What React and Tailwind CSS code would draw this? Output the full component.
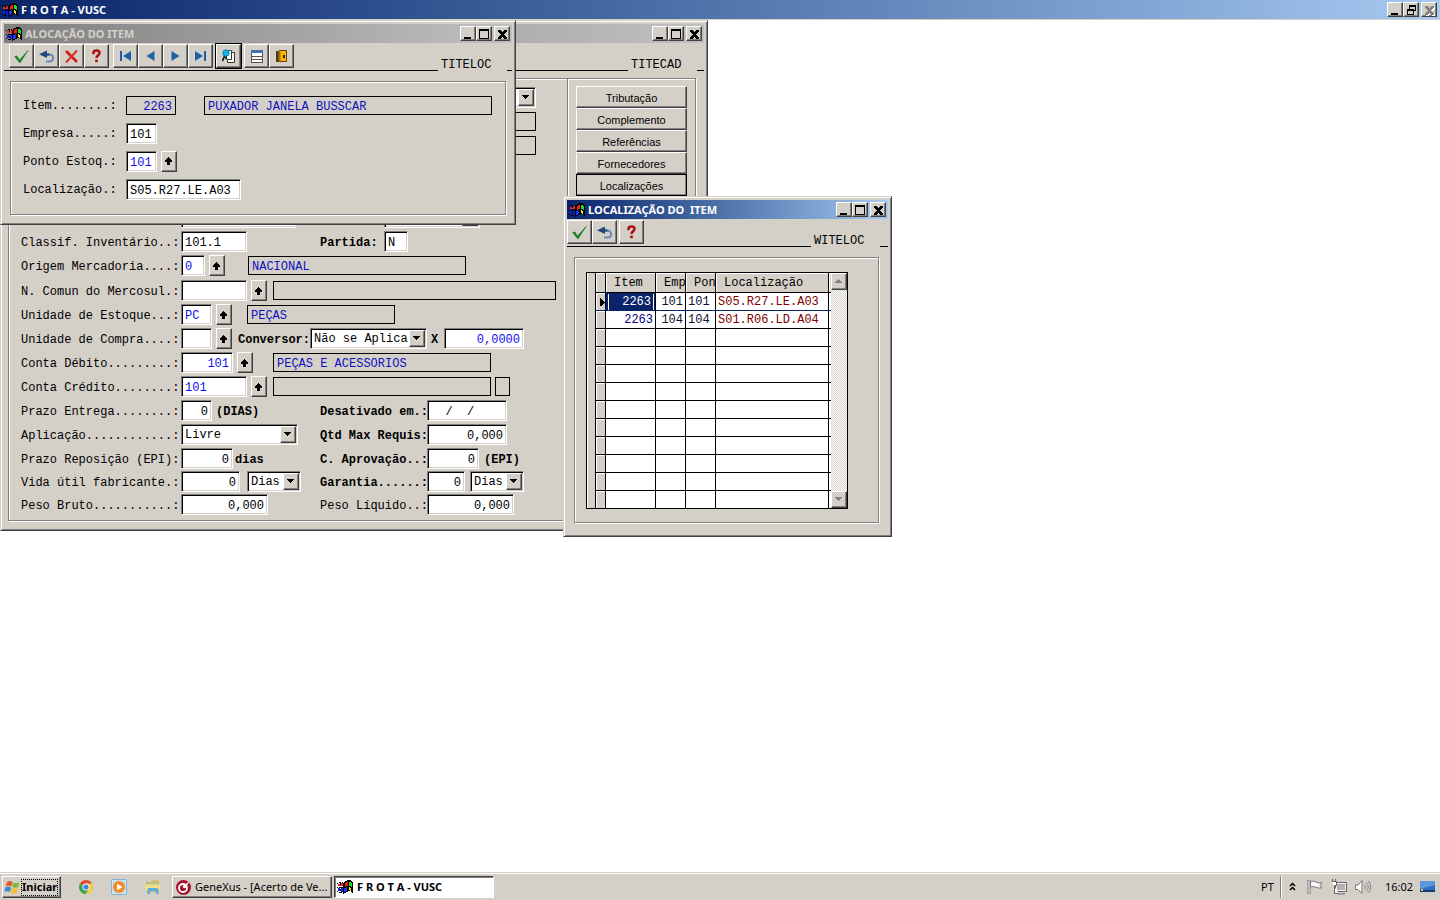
import { useState } from "react";
import clsx from "clsx";

const RAISED =
  "border border-t-white border-l-white border-r-[#404040] border-b-[#404040] bg-[#d4d0c8] shadow-[inset_-1px_-1px_0_#808080]";
const SUNKEN =
  "border border-t-[#808080] border-l-[#808080] border-r-white border-b-white shadow-[inset_1px_1px_0_#000,inset_-1px_-1px_0_#d4d0c8] bg-white";

/* ---------- icons ---------- */

const FlagIcon = () => (
  <svg width="17" height="16" viewBox="0 0 17 16" shapeRendering="crispEdges" aria-hidden="true" className="shrink-0">
    <path d="M7 3h1V2h2V1h4v1h1v1h1v11h-1v-1h-1v-1h-3v1H9v1H7v1H6V4h1z" fill="#000" />
    <path d="M8 4h1V3h2v4H9v1H8z" fill="#f02020" />
    <path d="M12 3h2v1h1v4h-1V7h-2z" fill="#20e020" />
    <path d="M7 9h2V8h1v4H9v1H7z" fill="#2030f0" />
    <path d="M12 8h1v1h1v3h-1v-1h-1z" fill="#f0f020" />
    <path d="M0 4h1v1H0zM2 3h2v1H2zM5 3h1v1H5zM0 8h1v1H0zM2 8h4v1H2zM0 12h1v1H0zM2 13h3v1H2zM3 4h1v2H3zM3 10h1v2H3z" fill="#000" />
    <path d="M1 5h2v2H1zM4 4h2v3H4zM3 6h1v1H3z" fill="#e02828" />
    <path d="M1 9h2v3H1zM4 9h2v4H4z" fill="#1020e0" />
  </svg>
);

const CheckIcon = () => (
  <svg width="17" height="17" viewBox="0 0 17 17" aria-hidden="true">
    <path d="M1.500 8.500 4 7.500 6.500 11.500 15.500 2 7 15.500z" fill="#1c8a28" />
    <path d="M2 8.500 6.500 14 15 2.500" fill="none" stroke="#1c7a28" strokeWidth="1" />
  </svg>
);

const UndoIcon = () => (
  <svg width="17" height="17" viewBox="0 0 17 17" aria-hidden="true">
    <path d="M7 6.500h4c5.500 0 5.500 7 0 7H8" fill="none" stroke="#6a8bb8" strokeWidth="2" />
    <path d="M1 6.200 9 2.500v7.500z" fill="#1f4778" />
    <path d="M8 6.500h3.500" stroke="#1f4778" strokeWidth="2" />
  </svg>
);

const CancelIcon = () => (
  <svg width="17" height="17" viewBox="0 0 17 17" aria-hidden="true">
    <path d="M3 3 14 14" stroke="#d81818" strokeWidth="2.600" />
    <path d="M14 2.500 3 14.500" stroke="#d83028" strokeWidth="2" />
  </svg>
);

const HelpIcon = () => (
  <svg width="17" height="17" viewBox="0 0 17 17" aria-hidden="true">
    <path d="M5.500 6.200V4.600C5.500 1.600 11.700 1.600 11.500 5c0 2.200-3 2.300-3 5" fill="none" stroke="#a81010" strokeWidth="2.500" />
    <rect x="7.200" y="11.600" width="2.600" height="2.600" fill="#a81010" />
  </svg>
);

const NavIcon = ({ back, bar }) => (
  <svg width="17" height="17" viewBox="0 0 17 17" aria-hidden="true">
    <g transform={back ? undefined : "matrix(-1 0 0 1 17 0)"} fill="#1d62a8">
      {bar && <rect x="3" y="3" width="2" height="10" />}
      <path d={bar ? "M6 8 14 3v10z" : "M4.500 8 12.500 3v10z"} />
    </g>
  </svg>
);

const SearchDocsIcon = () => (
  <svg width="17" height="17" viewBox="0 0 17 17" aria-hidden="true">
    <path d="M6.500 2.500h5v9h-5z" fill="#fff" stroke="#444" />
    <path d="M11.500 4.500h3v10h-7v-3h4z" fill="#fff" stroke="#333" />
    <path d="M4.500 8 2.500 13M6 8v3" stroke="#111" strokeWidth="1.600" />
    <circle cx="6" cy="5" r="3.200" fill="#18b0e8" stroke="#1080b0" />
  </svg>
);

const ListIcon = () => (
  <svg width="17" height="17" viewBox="0 0 17 17" shapeRendering="crispEdges" aria-hidden="true">
    <rect x="3" y="4" width="11" height="11" fill="#fff" />
    <path d="M3 2h12v3H3z" fill="#3f74b0" />
    <path d="M3 5h1v10H3zM14 5h1v10h-1zM3 8h12v1H3zM3 11h12v1H3zM3 14h12v1H3z" fill="#555" />
  </svg>
);

const DoorIcon = () => (
  <svg width="17" height="17" viewBox="0 0 17 17" aria-hidden="true">
    <path d="M3 3h4v11H3z" fill="#4a3b20" />
    <path d="M6 2.500h7.500v11H7" fill="#ffb400" stroke="#5a4410" />
    <path d="M7.500 4v11l-2-2V3z" fill="#a87400" />
    <rect x="10" y="7" width="2" height="3" fill="#222" />
  </svg>
);

const UpArrow = () => (
  <svg width="8" height="8" viewBox="0 0 8 8" shapeRendering="crispEdges" aria-hidden="true">
    <path d="M3 0h1v1h1v1h1v1h1v2H5v3H2V5H0V3h1V2h1V1h1z" fill="#000" />
  </svg>
);

const Triangle = ({ up, color = "#000" }) => (
  <svg width="8" height="5" viewBox="0 0 8 5" shapeRendering="crispEdges" aria-hidden="true">
    <path d={up ? "M3 0h1v1h1v1h1v1h1v1H0V3h1V2h1V1h1z" : "M0 0h7v1H6v1H5v1H4v1H3V3H2V2H1V1H0z"} fill={color} />
  </svg>
);

const CAPTION_PATHS = {
  Minimizar: "M2 9h7v2H2z",
  Maximizar: "M1 1h10v10H1zM2 3v7h8V3z",
  Restaurar: "M4 1h7v6H9v4H2V5h2zM5 3v2h4v1h1V3zM3 7v3h5V7z",
  Fechar: "M2 2h2v1h1v1h2V3h1V2h2v1H9v1H8v1H7v2h1v1h1v1h1v1H8V9H7V8H5v1H4v1H2V9h1V8h1V7h1V5H4V4H3V3H2z",
};

/* ---------- window chrome ---------- */

const CaptionButton = ({ name, disabled }) => (
  <button
    type="button"
    aria-label={name}
    disabled={disabled}
    className={clsx(RAISED, "flex h-[15px] w-4 items-center justify-center", name === "Fechar" && "ml-[2px]")}
  >
    <svg width="12" height="12" viewBox="0 0 12 12" shapeRendering="crispEdges" aria-hidden="true">
      {disabled && (
        <path d={CAPTION_PATHS[name]} fill="#fff" stroke="#fff" strokeWidth="1" transform="translate(1 1)" />
      )}
      <path
        d={CAPTION_PATHS[name]}
        fill={disabled ? "#808080" : "#000"}
        stroke={name === "Fechar" ? (disabled ? "#808080" : "#000") : "none"}
        strokeWidth="1"
        fillRule="evenodd"
      />
    </svg>
  </button>
);

const TitleBar = ({ title, active }) => (
  <div
    className={clsx(
      "flex h-[19px] items-center bg-linear-to-r pr-[2px] pl-[2px] font-['Noto_Sans',sans-serif] text-[11px] font-bold",
      active ? "from-[#0a246a] to-[#a6caf0] text-white" : "from-[#808080] to-[#c0c0c0] text-[#d4d0c8]"
    )}
  >
    <FlagIcon />
    <h2 className="ml-[2px] flex-1 truncate whitespace-pre">{title}</h2>
    <CaptionButton name="Minimizar" />
    <CaptionButton name="Maximizar" />
    <CaptionButton name="Fechar" />
  </div>
);

const ToolHeader = ({ code, endClass, children }) => (
  <div className="flex h-7 items-end">
    <div className="flex h-full flex-1 items-start border-b border-black pt-px">{children}</div>
    <span className="w-[69px] pl-[3px] leading-3">{code}</span>
    <span className={clsx("border-b border-black", endClass)} />
  </div>
);

const ToolButton = ({ label, focused, className, children }) => (
  <button
    type="button"
    aria-label={label}
    className={clsx(
      RAISED,
      "flex h-6 w-[25px] items-center justify-center",
      focused && "outline-1 outline-black",
      className
    )}
  >
    {children}
  </button>
);

const AppWindow = ({ title, active, className, children }) => (
  <section
    className={clsx(
      "absolute border border-t-[#d4d0c8] border-r-[#404040] border-b-[#404040] border-l-[#d4d0c8] bg-[#d4d0c8] p-[3px] shadow-[inset_1px_1px_0_#fff,inset_-1px_-1px_0_#808080]",
      className
    )}
  >
    <TitleBar title={title} active={active} />
    {children}
  </section>
);

const Group = ({ className, children }) => (
  <div className={clsx("border border-[#808080] shadow-[1px_1px_0_#fff,inset_1px_1px_0_#fff]", className)}>
    {children}
  </div>
);

/* ---------- form controls ---------- */

const TextField = ({ id, label, value = "", className }) => {
  const [text, setText] = useState(value);
  return (
    <input
      id={id}
      aria-label={label}
      value={text}
      onChange={(e) => setText(e.target.value)}
      className={clsx(SUNKEN, "h-[21px] px-[3px] pt-[3px] outline-none", className)}
    />
  );
};

const SelectField = ({ id, label, options, className }) => (
  <div className={clsx(SUNKEN, "flex h-[21px] p-px", className)}>
    <select id={id} aria-label={label} className="min-w-0 flex-1 appearance-none pt-px pl-[2px] outline-none">
      {options.map((option) => (
        <option key={option}>{option}</option>
      ))}
    </select>
    <span className={clsx(RAISED, "pointer-events-none flex w-4 shrink-0 items-center justify-center")}>
      <Triangle />
    </span>
  </div>
);

const Flat = ({ className, children }) => (
  <output className={clsx("block h-[19px] shrink-0 border border-black px-[3px] pt-[2px] leading-4 text-[#1010c0]", className)}>
    {children}
  </output>
);

const Lookup = ({ label }) => (
  <button
    type="button"
    aria-label={`Pesquisar ${label}`}
    className={clsx(RAISED, "ml-[4px] flex h-[21px] w-4 shrink-0 items-center justify-center")}
  >
    <UpArrow />
  </button>
);

const Row = ({ id, label, height = "h-6", children }) => (
  <div className={height}>
    <div className="flex h-[21px] items-center">
      {label ? (
        <label htmlFor={id} className="w-[160px] shrink-0 pt-[2px] whitespace-nowrap">
          {label}
        </label>
      ) : (
        <span className="w-[160px] shrink-0" />
      )}
      {children}
    </div>
  </div>
);

/* left part of a row that carries a second field */
const First = ({ children }) => <div className="flex w-[139px] shrink-0 items-center">{children}</div>;

const SecondLabel = ({ id, className = "font-bold", children }) => (
  <label htmlFor={id} className={clsx("w-[107px] shrink-0 pt-[2px] whitespace-nowrap", className)}>
    {children}
  </label>
);

/* ---------- windows ---------- */

const SIDE_BUTTONS = ["Tributação", "Complemento", "Referências", "Fornecedores", "Localizações"];

const CadastroWindow = () => (
  <AppWindow className="top-0 left-0 w-[708px]">
    <ToolHeader code="TITECAD" endClass="w-[7px]" />
    <Group className="mt-[7px] mr-[8px] mb-[6px] ml-[4px] flex">
      <form className="flex-1 pt-[8px] pb-[5px] pl-[12px]">
        <Row>
          <SelectField label="Tipo" options={[""]} className="w-[355px]" />
        </Row>
        <Row>
          <Flat className="w-[355px]" />
        </Row>
        <Row height="h-[72px]">
          <Flat className="w-[355px]" />
        </Row>
        <Row>
          <TextField label="Marca" className="w-[115px]" />
          <SelectField label="Situação" options={[""]} className="ml-[88px] w-[96px]" />
        </Row>
        <Row id="classif" label="Classif. Inventário..:">
          <First>
            <TextField id="classif" value="101.1" className="w-[66px]" />
          </First>
          <label htmlFor="partida" className="w-[64px] pt-[2px] font-bold">
            Partida:
          </label>
          <TextField id="partida" value="N" className="w-[24px]" />
        </Row>
        <Row id="origem" label="Origem Mercadoria....:" height="h-[25px]">
          <TextField id="origem" value="0" className="w-[24px] text-[#1010f0]" />
          <Lookup label="origem" />
          <Flat className="ml-[23px] w-[218px]">NACIONAL</Flat>
        </Row>
        <Row id="mercosul" label="N. Comun do Mercosul.:">
          <TextField id="mercosul" className="w-[66px]" />
          <Lookup label="mercosul" />
          <Flat className="ml-[6px] w-[283px]" />
        </Row>
        <Row id="unEstoque" label="Unidade de Estoque...:">
          <TextField id="unEstoque" value="PC" className="w-[31px] text-[#1010f0]" />
          <Lookup label="unidade de estoque" />
          <Flat className="ml-[15px] w-[148px]">PEÇAS</Flat>
        </Row>
        <Row id="unCompra" label="Unidade de Compra....:">
          <TextField id="unCompra" className="w-[31px]" />
          <Lookup label="unidade de compra" />
          <label htmlFor="conversor" className="ml-[6px] w-[72px] pt-[2px] font-bold">
            Conversor:
          </label>
          <SelectField id="conversor" options={["Não se Aplica"]} className="w-[117px]" />
          <label htmlFor="fator" className="w-[17px] pt-[2px] pl-[4px] font-bold">
            X
          </label>
          <TextField id="fator" value="0,0000" className="w-[80px] text-right text-[#1010f0]" />
        </Row>
        <Row id="debito" label="Conta Débito.........:">
          <TextField id="debito" value="101" className="w-[52px] text-right text-[#1010f0]" />
          <Lookup label="conta débito" />
          <Flat className="ml-[20px] w-[218px]">PEÇAS E ACESSORIOS</Flat>
        </Row>
        <Row id="credito" label="Conta Crédito........:">
          <TextField id="credito" value="101" className="w-[66px] text-[#1010f0]" />
          <Lookup label="conta crédito" />
          <Flat className="ml-[6px] w-[218px]" />
          <Flat className="ml-[4px] w-[15px]" />
        </Row>
        <Row id="entrega" label="Prazo Entrega........:">
          <First>
            <TextField id="entrega" value="0" className="w-[31px] text-right" />
            <span className="ml-[4px] pt-[2px] font-bold">(DIAS)</span>
          </First>
          <SecondLabel id="desativado">Desativado em.:</SecondLabel>
          <TextField id="desativado" value="  /  /" className="w-[80px]" />
        </Row>
        <Row id="aplicacao" label="Aplicação............:">
          <First>
            <SelectField id="aplicacao" options={["Livre"]} className="w-[117px]" />
          </First>
          <SecondLabel id="maxRequis">Qtd Max Requis:</SecondLabel>
          <TextField id="maxRequis" value="0,000" className="w-[80px] text-right" />
        </Row>
        <Row id="reposicao" label="Prazo Reposição (EPI):" height="h-[23px]">
          <First>
            <TextField id="reposicao" value="0" className="w-[52px] text-right" />
            <span className="ml-[2px] pt-[2px] font-bold">dias</span>
          </First>
          <SecondLabel id="aprovacao">C. Aprovação..:</SecondLabel>
          <TextField id="aprovacao" value="0" className="w-[52px] text-right" />
          <span className="ml-[5px] pt-[2px] font-bold">(EPI)</span>
        </Row>
        <Row id="vida" label="Vida útil fabricante.:" height="h-[23px]">
          <First>
            <TextField id="vida" value="0" className="w-[59px] text-right" />
            <SelectField label="Unidade da vida útil" options={["Dias"]} className="ml-[7px] w-[54px]" />
          </First>
          <SecondLabel id="garantia">Garantia......:</SecondLabel>
          <TextField id="garantia" value="0" className="w-[38px] text-right" />
          <SelectField label="Unidade da garantia" options={["Dias"]} className="ml-[5px] w-[54px]" />
        </Row>
        <Row id="bruto" label="Peso Bruto...........:" height="h-[21px]">
          <First>
            <TextField id="bruto" value="0,000" className="w-[87px] text-right" />
          </First>
          <SecondLabel id="liquido" className="font-normal">
            Peso Líquido..:
          </SecondLabel>
          <TextField id="liquido" value="0,000" className="w-[87px] text-right" />
        </Row>
      </form>
      <nav className="flex w-[128px] flex-col border-l border-[#808080] pt-[7px] pr-[8px] pl-[8px] shadow-[inset_1px_0_0_#fff]">
        {SIDE_BUTTONS.map((name) => (
          <button
            key={name}
            type="button"
            className={clsx(
              RAISED,
              "h-[22px] pt-[2px] font-['Liberation_Sans',Arial,sans-serif] text-[11px]",
              name === "Localizações" && "outline-1 -outline-offset-1 outline-black"
            )}
          >
            {name}
          </button>
        ))}
      </nav>
    </Group>
  </AppWindow>
);

const AlocRow = ({ id, label, children }) => (
  <div className="flex h-7 items-center">
    <label htmlFor={id} className="w-[103px] shrink-0 pt-[2px] whitespace-nowrap">
      {label}
    </label>
    {children}
  </div>
);

const AlocacaoWindow = () => (
  <AppWindow title="ALOCAÇÃO DO ITEM" className="top-0 left-0 w-[516px]">
    <ToolHeader code="TITELOC" endClass="w-[5px]">
      <ToolButton label="Confirmar" className="ml-[5px]"><CheckIcon /></ToolButton>
      <ToolButton label="Voltar"><UndoIcon /></ToolButton>
      <ToolButton label="Cancelar"><CancelIcon /></ToolButton>
      <ToolButton label="Ajuda"><HelpIcon /></ToolButton>
      <ToolButton label="Primeiro" className="ml-[4px]"><NavIcon back bar /></ToolButton>
      <ToolButton label="Anterior"><NavIcon back /></ToolButton>
      <ToolButton label="Próximo"><NavIcon /></ToolButton>
      <ToolButton label="Último"><NavIcon bar /></ToolButton>
      <ToolButton label="Pesquisar" focused className="ml-[3px]"><SearchDocsIcon /></ToolButton>
      <ToolButton label="Lista" className="ml-[3px]"><ListIcon /></ToolButton>
      <ToolButton label="Sair"><DoorIcon /></ToolButton>
    </ToolHeader>
    <Group className="mx-[6px] mt-[10px] mb-[6px] pt-[9px] pb-[11px] pl-[12px]">
      <AlocRow id="item" label="Item........:">
        <Flat className="w-[50px] text-right">2263</Flat>
        <Flat className="ml-[28px] w-[288px]">PUXADOR JANELA BUSSCAR</Flat>
      </AlocRow>
      <AlocRow id="empresa" label="Empresa.....:">
        <TextField id="empresa" value="101" className="w-[31px]" />
      </AlocRow>
      <AlocRow id="ponto" label="Ponto Estoq.:">
        <TextField id="ponto" value="101" className="w-[31px] text-[#1010f0]" />
        <Lookup label="ponto de estoque" />
      </AlocRow>
      <AlocRow id="local" label="Localização.:">
        <TextField id="local" value="S05.R27.LE.A03" className="w-[115px]" />
      </AlocRow>
    </Group>
  </AppWindow>
);

const LOCATIONS = [
  { item: "2263", emp: "101", pon: "101", loc: "S05.R27.LE.A03" },
  { item: "2263", emp: "104", pon: "104", loc: "S01.R06.LD.A04" },
];

const rows = Array.from({ length: 12 }, (_, i) => LOCATIONS[i] || {});

const LocationTable = () => (
  <table className="w-[235px] table-fixed border-separate border-spacing-0 border-l border-black bg-white text-left">
    <colgroup>
      <col className="w-[10px]" />
      <col className="w-[50px]" />
      <col className="w-[30px]" />
      <col className="w-[30px]" />
      <col className="w-[113px]" />
      <col className="w-[2px]" />
    </colgroup>
    <thead>
      <tr className="h-[20px] bg-[#d4d0c8] [&>th]:overflow-hidden [&>th]:border-b [&>th]:border-black [&>th]:p-0 [&>th]:font-normal [&>th]:whitespace-nowrap [&>th]:shadow-[inset_1px_1px_0_#fff]">
        <th className="border-r" />
        <th className="border-r"><span className="pl-[8px]">Item</span></th>
        <th className="border-r"><span className="pl-[8px]">Emp</span></th>
        <th className="border-r"><span className="pl-[8px]">Pon</span></th>
        <th className="border-r"><span className="pl-[8px]">Localização</span></th>
        <th />
      </tr>
    </thead>
    <tbody>
      {rows.map((row, i) => (
        <tr
          key={i}
          className={clsx(
            "leading-4 [&>td]:p-0 [&>td]:whitespace-nowrap",
            i === 0 ? "[&>td]:border-b-[#0a246a]" : "[&>td]:border-b-black",
            i === 11 ? "h-[17px]" : "h-[18px] [&>td]:border-b"
          )}
        >
          <td className="border-r border-r-black bg-[#d4d0c8] shadow-[inset_1px_1px_0_#fff]">
            {i === 0 && (
              <svg width="9" height="9" viewBox="0 0 9 9" shapeRendering="crispEdges" aria-hidden="true">
                <path d="M4 1h1v1h1v1h1v1h1v1h1v1H8v1H7v1H6v1H4z" fill="#000" />
              </svg>
            )}
          </td>
          <td className={clsx("border-r border-r-black text-right", i === 0 ? "bg-[#0a246a] text-white" : "text-[#000080]")}>
            {i === 0 ? (
              <span className="mr-px ml-[2px] block border-x border-white pr-[2px]">{row.item}</span>
            ) : (
              <span className="pr-[2px]">{row.item}</span>
            )}
          </td>
          <td className="border-r border-r-black text-right text-[#101030]"><span className="pr-[2px]">{row.emp}</span></td>
          <td className="border-r border-r-black text-[#101030]"><span className="pl-[2px]">{row.pon}</span></td>
          <td className="border-r border-r-black text-[#800000]"><span className="pl-[2px]">{row.loc}</span></td>
          <td />
        </tr>
      ))}
    </tbody>
  </table>
);

const LocalizacaoWindow = () => (
  <AppWindow title="LOCALIZAÇÃO DO  ITEM" active className="top-[176px] left-[563px] w-[329px]">
    <ToolHeader code="WITELOC" endClass="w-[8px]">
      <ToolButton label="Confirmar"><CheckIcon /></ToolButton>
      <ToolButton label="Voltar"><UndoIcon /></ToolButton>
      <ToolButton label="Ajuda" className="ml-[2px]"><HelpIcon /></ToolButton>
    </ToolHeader>
    <Group className="mt-[10px] mr-[9px] mb-[10px] ml-[7px] pt-[14px] pb-[13px] pl-[11px]">
      <div className="flex w-[262px] border border-black">
        <span className="w-[8px] border-l border-white" />
        <LocationTable />
        <div className="flex flex-1 flex-col justify-between bg-[#d4d0c8] bg-[repeating-conic-gradient(#fff_0_25%,#d4d0c8_0_50%)] bg-size-[2px_2px]">
          <button type="button" aria-label="Rolar para cima" className={clsx(RAISED, "flex h-[17px] items-center justify-center")}>
            <Triangle up color="#808080" />
          </button>
          <button type="button" aria-label="Rolar para baixo" className={clsx(RAISED, "flex h-[17px] items-center justify-center")}>
            <Triangle color="#808080" />
          </button>
        </div>
      </div>
    </Group>
  </AppWindow>
);

/* ---------- taskbar ---------- */

const StartLogo = () => (
  <svg width="17" height="17" viewBox="0 0 17 17" aria-hidden="true" className="shrink-0">
    <path d="M3 3q3-2 5.500 0L7.300 7.500Q5 6 1.800 7.500z" fill="#e8582a" />
    <path d="M9.300 3.500q3 1.500 6-.3L14 8q-3 1.500-5.900-.2z" fill="#7db83a" />
    <path d="M1.500 8.500q3-1.500 5.600 0L5.800 13q-2.700-1.500-5.500 0z" fill="#3b8bd8" />
    <path d="M7.900 9q3 1.500 5.900.2L12.500 14q-3 1.300-5.900-.5z" fill="#f6bd2c" />
  </svg>
);

const ChromeLogo = () => (
  <svg width="16" height="16" viewBox="0 0 16 16" aria-hidden="true">
    <circle cx="8" cy="8" r="7" fill="#f7cf2e" />
    <path d="M8 8 1.900 4.500A7 7 0 0 1 14.100 4.500H8z" fill="#dd4b3e" />
    <path d="M8 8 1.900 4.500A7 7 0 0 0 7.500 15L11 9.700z" fill="#3aa757" />
    <circle cx="8" cy="8" r="3.500" fill="#fff" />
    <circle cx="8" cy="8" r="2.600" fill="#3f7fe8" />
  </svg>
);

const PlayerLogo = () => (
  <svg width="18" height="18" viewBox="0 0 18 18" aria-hidden="true">
    <rect x="1.500" y="1.500" width="15" height="15" rx="1" fill="#c9e2f4" stroke="#7fb2d8" />
    <circle cx="9" cy="9" r="6" fill="#f58a1f" />
    <path d="M7 5.500 12.500 9 7 12.500z" fill="#fff" />
  </svg>
);

const ExplorerLogo = () => (
  <svg width="18" height="18" viewBox="0 0 18 18" aria-hidden="true">
    <path d="M2 4h5l1-1.500h7V14H2z" fill="#dcb24c" />
    <path d="M4 4.500h10v3H4z" fill="#9fd0a0" />
    <path d="M1.500 6.500h15V13h-15z" fill="#f5dc88" />
    <path d="M3.500 16v-4.500q0-1.500 1.500-1.500h8q1.500 0 1.500 1.500V16h-2.500v-3h-6v3z" fill="#5aabe0" />
  </svg>
);

const GenexusLogo = () => (
  <svg width="17" height="17" viewBox="0 0 17 17" aria-hidden="true">
    <circle cx="8.500" cy="8.500" r="7.500" fill="#a5122e" />
    <circle cx="8" cy="9" r="4" fill="none" stroke="#fff" strokeWidth="1.800" />
    <circle cx="9.500" cy="7.500" r="1.700" fill="#fff" />
    <path d="M11 6 13.500 3.500" stroke="#fff" strokeWidth="1.200" />
  </svg>
);

const TrayIcons = () => (
  <>
    <svg width="8" height="10" viewBox="0 0 8 10" aria-hidden="true" className="mr-[9px]">
      <path d="M1 4 3.500 1.500 6 4M1 8 3.500 5.500 6 8" fill="none" stroke="#000" strokeWidth="1.500" />
    </svg>
    <svg width="18" height="18" viewBox="0 0 18 18" aria-hidden="true" className="mr-[6px]">
      <path d="M3 2v14" stroke="#777" strokeWidth="3" />
      <path d="M3 2.500v13" stroke="#fff" />
      <path d="M4.500 3.500q3-1 5.500.5 2 1.500 6 .8l-2 3 2 2q-3.500.8-6-.6-2.500-1.300-5.500-.2z" fill="#f8f8f8" stroke="#777" />
    </svg>
    <svg width="18" height="18" viewBox="0 0 18 18" aria-hidden="true" className="mr-[6px]">
      <path d="M5.500 4.500h11v9h-11zM8 16h7" fill="#f0f0f0" stroke="#666" />
      <path d="M7 6h8v6H7z" fill="#b0b0b0" />
      <path d="M1.500 3.500h5v4h-2v8h4" fill="#fff" stroke="#666" />
      <path d="M2.500 1v2.500M5.500 1v2.500" stroke="#666" />
    </svg>
    <svg width="18" height="18" viewBox="0 0 18 18" aria-hidden="true" className="mr-[13px]">
      <path d="M1.500 7h2.500l4-4.500v13L4 11.500H1.500z" fill="#fafafa" stroke="#777" />
      <path d="M10.500 6.500q2 2.500 0 5M12.500 4.500q3.500 4.500 0 9M14.500 3q4.500 6 0 12" fill="none" stroke="#888" />
    </svg>
  </>
);

const TaskBar = () => (
  <footer className="flex h-7 shrink-0 items-center border-t border-[#d4d0c8] bg-[#d4d0c8] pt-px pl-[2px] font-['Noto_Sans',sans-serif] text-[11px] shadow-[inset_0_1px_0_#fff]">
    <button type="button" className={clsx(RAISED, "flex h-[22px] w-[59px] items-center pl-px font-bold")}>
      <StartLogo />
      <span className="flex h-[17px] items-center border border-dotted border-black">Iniciar</span>
    </button>
    <div className="ml-[17px] flex w-[94px] items-center gap-[16px]">
      <button type="button" aria-label="Chrome"><ChromeLogo /></button>
      <button type="button" aria-label="Media Player"><PlayerLogo /></button>
      <button type="button" aria-label="Explorer"><ExplorerLogo /></button>
    </div>
    <button type="button" className={clsx(RAISED, "flex h-[22px] w-[160px] items-center gap-[3px] pl-[2px]")}>
      <GenexusLogo />
      <span>GeneXus - [Acerto de Ve...</span>
    </button>
    <button
      type="button"
      className="ml-[2px] flex h-[22px] w-[160px] items-center gap-[3px] border border-t-[#404040] border-r-white border-b-white border-l-[#404040] bg-white pl-[2px] font-bold shadow-[inset_1px_1px_0_#808080]"
    >
      <FlagIcon />
      <span>F R O T A - VUSC</span>
    </button>
    <span className="ml-auto">PT</span>
    <div className="ml-[6px] flex h-[22px] items-center border-l border-[#808080] pr-[4px] pl-[8px] shadow-[inset_1px_0_0_#fff]">
      <TrayIcons />
      <time className="mr-[6px]">16:02</time>
      <svg width="17" height="14" viewBox="0 0 17 14" aria-hidden="true">
        <path d="M1 1h15v10H1z" fill="#2f6fc0" />
        <path d="M1 1h15v4L1 9z" fill="#5b97da" />
        <path d="M1 10h15v2H1z" fill="#163c78" />
        <path d="M2 9h2v2H2z" fill="#f0c030" />
      </svg>
    </div>
  </footer>
);

export default function App() {
  return (
    <div className="flex h-screen flex-col overflow-hidden bg-white font-['Liberation_Mono','Courier_New',monospace] text-[12px] leading-4 text-black">
      <header className="flex h-5 shrink-0 items-center border-b border-[#d4d0c8] bg-linear-to-r from-[#0a246a] to-[#a6caf0] pr-[3px] pl-[2px] font-['Noto_Sans',sans-serif] text-[11px] font-bold text-white">
        <FlagIcon />
        <h1 className="ml-[2px] flex-1">F R O T A - VUSC</h1>
        <CaptionButton name="Minimizar" />
        <CaptionButton name="Restaurar" />
        <CaptionButton name="Fechar" disabled />
      </header>
      <main className="relative flex-1 overflow-hidden">
        <CadastroWindow />
        <AlocacaoWindow />
        <LocalizacaoWindow />
      </main>
      <TaskBar />
    </div>
  );
}
